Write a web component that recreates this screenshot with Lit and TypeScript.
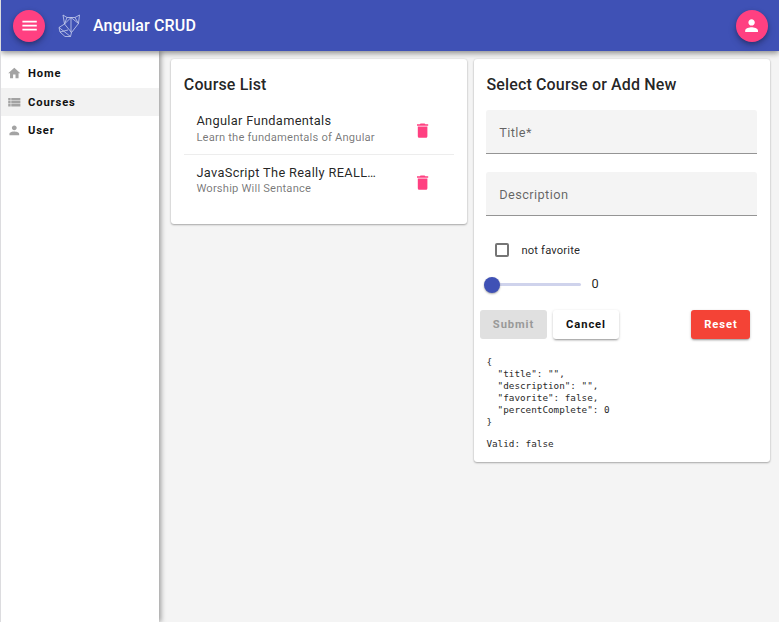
import { LitElement, html, css, svg } from "lit";
import { customElement, property, state } from "lit/decorators.js";

const ICONS: Record<string, string> = {
  menu: "M3 18h18v-2H3v2zm0-5h18v-2H3v2zm0-7v2h18V6H3z",
  person:
    "M12 12c2.21 0 4-1.79 4-4s-1.79-4-4-4-4 1.79-4 4 1.79 4 4 4zm0 2c-2.67 0-8 1.34-8 4v2h16v-2c0-2.66-5.33-4-8-4z",
  home: "M10 20v-6h4v6h5v-8h3L12 3 2 12h3v8z",
  list: "M2 5h4v4H2zM7 5h15v4H7zM2 10h4v4H2zM7 10h15v4H7zM2 15h4v4H2zM7 15h15v4H7z",
  trash: "M6 19c0 1.1.9 2 2 2h8c1.1 0 2-.9 2-2V7H6v12zM19 4h-3.5l-1-1h-5l-1 1H5v2h14V4z",
};

@customElement("mat-glyph")
export class MatGlyph extends LitElement {
  @property() name = "home";

  static styles = css`
    :host { display: inline-flex; }
    svg { width: 100%; height: 100%; fill: currentColor; display: block; }
  `;

  render() {
    return html`<svg viewBox="0 0 24 24">${svg`<path d=${ICONS[this.name]}></path>`}</svg>`;
  }
}

@customElement("app-root")
export class AppRoot extends LitElement {
  @state() private links = [
    { title: "Home", icon: "home", active: false },
    { title: "Courses", icon: "list", active: true },
    { title: "User", icon: "person", active: false },
  ];

  @state() private courses = [
    { title: "Angular Fundamentals", description: "Learn the fundamentals of Angular" },
    { title: "JavaScript The Really REALL…", description: "Worship Will Sentance" },
  ];

  @state() private model = { title: "", description: "", favorite: false, percentComplete: 0 };

  static styles = css`
    * { box-sizing: border-box; }
    :host {
      display: flex;
      flex-direction: column;
      width: 100%;
      height: 100vh;
      overflow: hidden;
      background: #f4f4f4;
      border-left: 1px solid #dcdcdf;
      box-sizing: border-box;
      font-family: Roboto, sans-serif;
      color: rgba(0, 0, 0, 0.87);
    }
    .toolbar {
      flex: none;
      position: relative;
      z-index: 3;
      height: 51px;
      padding: 0 11px 0 12.3px;
      display: flex;
      align-items: center;
      background: #3f51b5;
      color: #fff;
      box-shadow: 0 2px 6px rgba(0, 0, 0, 0.45);
    }
    .fab {
      width: 32px;
      height: 32px;
      padding: 0;
      border: 0;
      border-radius: 50%;
      background: #ff4081;
      color: #fff;
      display: flex;
      align-items: center;
      justify-content: center;
      box-shadow: 0 2px 4px rgba(0, 0, 0, 0.25), 0 4px 8px rgba(0, 0, 0, 0.16);
    }
    .fab mat-glyph { width: 19.2px; height: 19.2px; }
    .logo { width: 24px; height: 25px; margin-left: 12.7px; fill: none; stroke: #c9cfee; stroke-width: 0.8; }
    .brand { margin: 0 auto 0 11px; font-size: 16px; font-weight: 500; line-height: 20px; letter-spacing: 0.16px; }
    .body { flex: 1; min-height: 0; display: flex; }
    .nav {
      flex: none;
      position: relative;
      z-index: 2;
      width: 158px;
      padding-top: 8px;
      background: #fff;
      box-shadow: 2px 0 5px rgba(0, 0, 0, 0.36);
    }
    .link {
      height: 28.7px;
      padding: 0 6px;
      display: flex;
      align-items: center;
      gap: 6.4px;
      font-size: 11.2px;
      font-weight: 700;
      letter-spacing: 0.88px;
      color: #111;
    }
    .link.active { background: #f2f2f2; }
    .link mat-glyph { width: 14.6px; height: 14.6px; color: #a3a3a3; }
    .content { flex: 1; display: flex; align-items: flex-start; gap: 6.4px; padding: 8px 9.2px 0 12px; }
    .card {
      flex: 1 1 0;
      min-width: 0;
      padding: 13px 12.8px 12px;
      background: #fff;
      border-radius: 3px;
      box-shadow: 0 1px 2px rgba(0, 0, 0, 0.3), 0 0 2px rgba(0, 0, 0, 0.1);
    }
    h1 { margin: 0; font-size: 16px; line-height: 25.6px; font-weight: 500; letter-spacing: 0.15px; }
    .courses { padding: 6px 0 5px; }
    .course {
      height: 51.6px;
      padding: 2px 22px 0 12.6px;
      display: flex;
      align-items: center;
      border-bottom: 1px solid #ededed;
    }
    .course:last-child { border-bottom-color: transparent; }
    .text { width: 182px; }
    .name { white-space: nowrap; font-size: 12.8px; line-height: 16.4px; letter-spacing: 0.33px; }
    .desc { font-size: 11.2px; line-height: 16.6px; letter-spacing: 0.18px; color: rgba(0, 0, 0, 0.54); white-space: nowrap; }
    .course mat-glyph { position: relative; top: 1px; width: 19.2px; height: 19.2px; margin-left: auto; color: #ff4081; }
    .field {
      height: 44.5px;
      padding: 2px 13px 0 12.8px;
      display: flex;
      align-items: center;
      background: #f4f4f4;
      border-radius: 3px 3px 0 0;
      border-bottom: 1px solid #949494;
      font-size: 12.8px;
      letter-spacing: 0.4px;
      color: rgba(0, 0, 0, 0.6);
    }
    .field.first { margin-top: 12px; }
    .field + .field { margin-top: 17.5px; }
    .check { margin: 26.5px 0 0 8.5px; height: 15px; display: flex; align-items: center; gap: 12px; font-size: 11.2px; letter-spacing: 0.17px; }
    .box { width: 14.5px; height: 14.5px; border: 2px solid #757575; border-radius: 2px; }
    .slider { margin-top: 17.5px; height: 18px; display: flex; align-items: center; gap: 10px; font-size: 12.8px; }
    .track { position: relative; width: 95px; height: 3px; border-radius: 2px; background: #cfd3ec; }
    .thumb {
      position: absolute;
      left: -2px;
      top: -6px;
      width: 16px;
      height: 16px;
      border-radius: 50%;
      background: #3f51b5;
      box-shadow: 0 1px 2px rgba(0, 0, 0, 0.35);
    }
    .value { position: relative; top: -1px; }
    .actions { margin: 17px 6.6px 0 -6.4px; display: flex; gap: 6px; }
    .btn {
      height: 29px;
      padding: 0;
      border: 0;
      border-radius: 3px;
      font: 700 11.2px/29px Roboto, sans-serif;
      letter-spacing: 0.9px;
      background: #fff;
      color: #111;
      box-shadow: 0 2px 2px -1px rgba(0, 0, 0, 0.28), 0 1px 3px rgba(0, 0, 0, 0.2);
    }
    .submit { width: 67px; background: #e0e0e0; color: #999; box-shadow: none; }
    .cancel { width: 66px; }
    .reset { width: 59px; margin-left: auto; background: #f44336; color: #fff; }
    pre {
      margin: 0;
      font-family: "DejaVu Sans Mono", monospace;
      font-size: 9.3px;
      line-height: 12px;
      color: #2a2a2a;
    }
    .json { margin-top: 17px; }
    .valid { margin-top: 10px; }
  `;

  render() {
    return html`
      <header class="toolbar">
        <button class="fab" aria-label="Menu"><mat-glyph name="menu"></mat-glyph></button>
        <svg class="logo" viewBox="0 0 24 25">
          <path d="M5 2 L9 4.5 H17 L21.5 2 L20.5 10.5 L13.5 19.5 L6.5 11 Z M9 4.5 L6.5 11 L13 4.5 L20.5 10.5 L17 4.5 M13 4.5 V19.5 M6.5 11 L1 14.5 L2 19 L7 23.5 H12.5 L13.5 19.5 M1 14.5 L12.5 23.5 M2 19 L10 17"></path>
        </svg>
        <div class="brand">Angular CRUD</div>
        <button class="fab" aria-label="Account"><mat-glyph name="person"></mat-glyph></button>
      </header>
      <div class="body">
        <nav class="nav">
          ${this.links.map(
            (l) => html`<div class="link ${l.active ? "active" : ""}">
              <mat-glyph name=${l.icon}></mat-glyph><span>${l.title}</span>
            </div>`
          )}
        </nav>
        <main class="content">
          <section class="card">
            <h1>Course List</h1>
            <div class="courses">
              ${this.courses.map(
                (c) => html`<div class="course">
                  <div class="text">
                    <div class="name">${c.title}</div>
                    <div class="desc">${c.description}</div>
                  </div>
                  <mat-glyph name="trash"></mat-glyph>
                </div>`
              )}
            </div>
          </section>
          <section class="card">
            <h1>Select Course or Add New</h1>
            <div class="field first">Title*</div>
            <div class="field">Description</div>
            <div class="check"><span class="box"></span><span>not favorite</span></div>
            <div class="slider">
              <div class="track"><div class="thumb"></div></div>
              <span class="value">${this.model.percentComplete}</span>
            </div>
            <div class="actions">
              <button class="btn submit">Submit</button>
              <button class="btn cancel">Cancel</button>
              <button class="btn reset">Reset</button>
            </div>
            <pre class="json">${JSON.stringify(this.model, null, 2)}</pre>
            <pre class="valid">Valid: ${String(this.model.title.length > 0)}</pre>
          </section>
        </main>
      </div>
    `;
  }
}
